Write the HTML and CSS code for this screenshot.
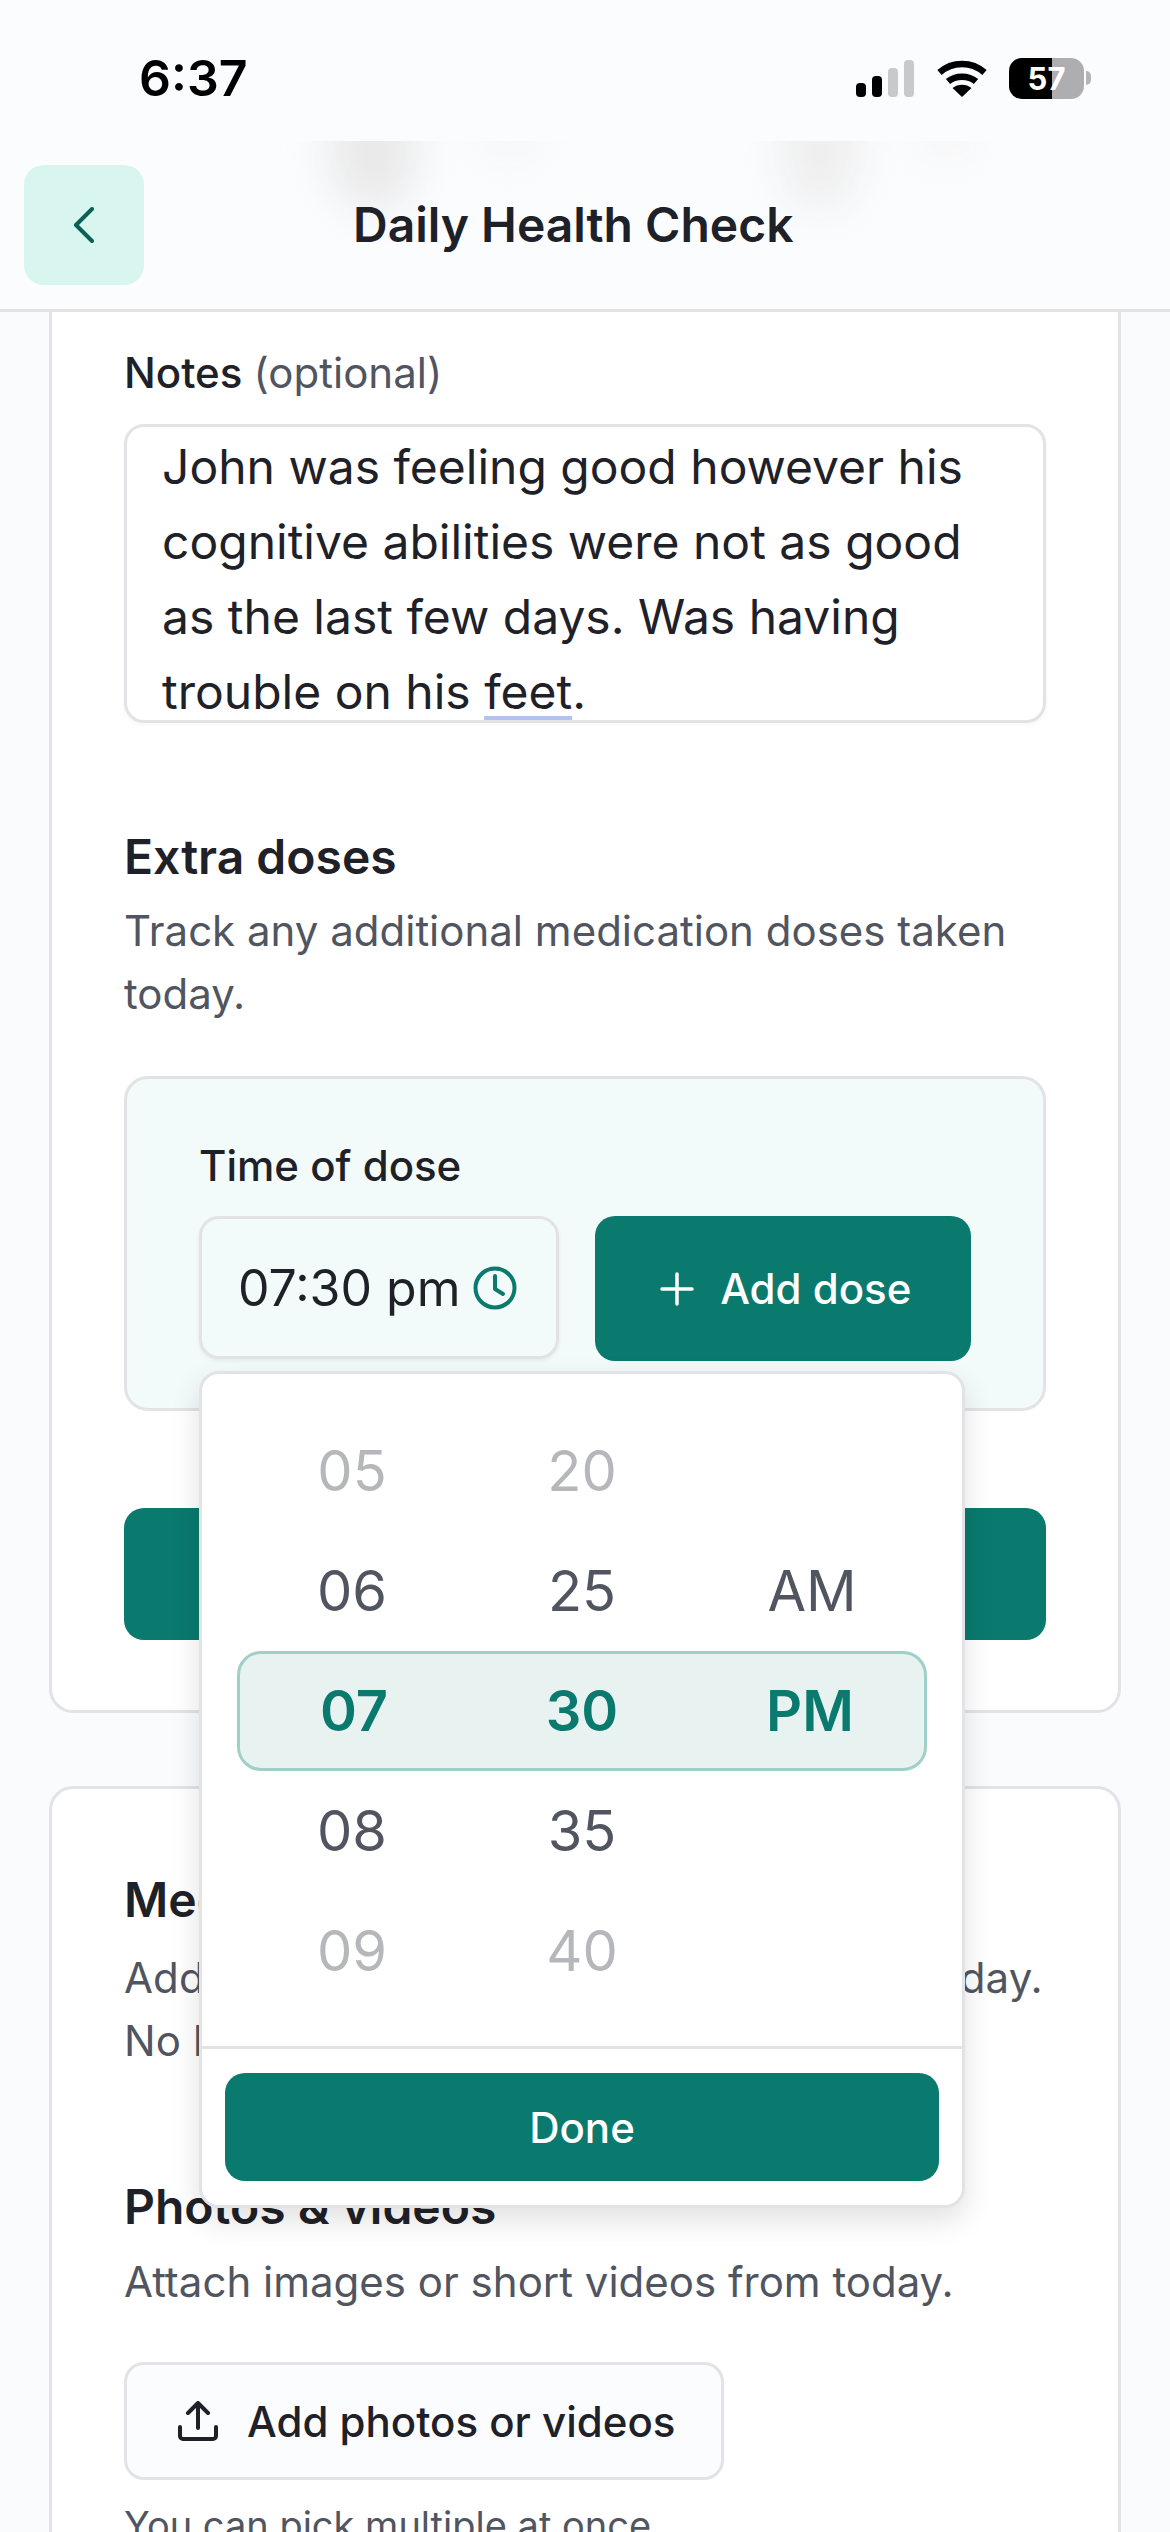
FILE: index.html
```html
<!DOCTYPE html>
<html lang="en">
<head>
  <meta charset="UTF-8" />
  <meta name="viewport" content="width=device-width, initial-scale=1.0"/>
  <title>Daily Health Check</title>
  <link rel="stylesheet" href="styles.css">
</head>
<body>
<div class="phone">

  <header class="top">
    <div class="status">
      <span class="clock">6:37</span>
      <div class="status-icons">
        <svg class="signal" width="58" height="37" viewBox="0 0 58 37">
          <rect x="0" y="23" width="10" height="14" rx="4" fill="#000"/>
          <rect x="16" y="16" width="10" height="21" rx="4" fill="#000"/>
          <rect x="32" y="8" width="10" height="29" rx="4" fill="#c8c9cb"/>
          <rect x="48" y="0" width="10" height="37" rx="4" fill="#c8c9cb"/>
        </svg>
        <svg class="wifi" width="50" height="37" viewBox="0 0 50 37" fill="none" stroke="#000" stroke-width="6.5">
          <path d="M2.5 12.5C15 1 35 1 47.5 12.5"/>
          <path d="M11 21.5C18.500 15 31.500 15 39 21.500"/>
          <path d="M25 37L15.500 28C20.500 23.500 29.500 23.500 34.500 28Z" fill="#000" stroke="none"/>
        </svg>
        <div class="battery"><span>57</span></div>
        <div class="battery-nub"></div>
      </div>
    </div>

    <div class="blur-spots">
      <i class="spot spot-a"></i>
      <i class="spot spot-b"></i>
      <i class="spot spot-c"></i>
      <i class="spot spot-d"></i>
    </div>

    <div class="nav">
      <button class="back">
        <svg width="20" height="36" viewBox="0 0 20 36" fill="none" stroke="#0b5f55" stroke-width="4" stroke-linecap="round" stroke-linejoin="round">
          <path d="M18 2L2 18l16 16"/>
        </svg>
      </button>
      <h1>Daily Health Check</h1>
    </div>
  </header>

  <main class="content">

    <section class="card card-first">
      <div class="field-label">Notes <span class="muted">(optional)</span></div>
      <div class="notes">John was feeling good however his<br>cognitive abilities were not as good<br>as the last few days. Was having<br>trouble on his <span class="spell">feet</span>.</div>

      <h2 class="heading extra-heading">Extra doses</h2>
      <p class="desc">Track any additional medication doses taken today.</p>

      <div class="dose-panel">
        <div class="dose-label">Time of dose</div>
        <div class="dose-row">
          <div class="time-input">
            <span>07:30 pm</span>
            <svg width="44" height="44" viewBox="0 0 44 44" fill="none" stroke="#0a7a6e" stroke-width="4" stroke-linecap="round" stroke-linejoin="round">
              <circle cx="22" cy="22" r="19.500"/>
              <path d="M22 10v13l8 5"/>
            </svg>
          </div>
          <button class="btn-green add-dose">
            <svg width="34" height="34" viewBox="0 0 34 34" fill="none" stroke="#fff" stroke-width="3.500" stroke-linecap="round">
              <path d="M17 2v30M2 17h30"/>
            </svg>
            Add dose
          </button>
        </div>
      </div>

      <button class="btn-green save-btn"></button>
    </section>

    <section class="card card-second">
      <h2 class="heading">Media</h2>
      <p class="desc media-desc">Add photos, videos or voice notes from today.<br>No limit on how many you can add.</p>

      <h2 class="heading photos-heading">Photos &amp; videos</h2>
      <p class="desc photos-desc">Attach images or short videos from today.</p>

      <button class="upload-btn">
        <svg width="40" height="40" viewBox="0 0 40 40" fill="none" stroke="#1f2128" stroke-width="4" stroke-linecap="round" stroke-linejoin="round">
          <path d="M20 27V3M10 12l10-10 10 10"/>
          <path d="M2 26v9a3 3 0 0 0 3 3h30a3 3 0 0 0 3-3v-9"/>
        </svg>
        Add photos or videos
      </button>
      <p class="desc pick-note">You can pick multiple at once.</p>
    </section>
  </main>

  <!-- selector de hora, abierto sobre el contenido -->
  <div class="picker">
    <div class="wheel">
      <div class="wheel-row faded"><span>05</span><span>20</span><span></span></div>
      <div class="wheel-row"><span>06</span><span>25</span><span>AM</span></div>
      <div class="wheel-row selected"><span>07</span><span>30</span><span>PM</span></div>
      <div class="wheel-row"><span>08</span><span>35</span><span></span></div>
      <div class="wheel-row faded"><span>09</span><span>40</span><span></span></div>
    </div>
    <div class="picker-foot">
      <button class="btn-green done">Done</button>
    </div>
  </div>

</div>
</body>
</html>
```

FILE: styles.css
```css
* {
  box-sizing: border-box;
}

body {
  margin: 0;
  font-family: Inter, "Liberation Sans", sans-serif;
  background-color: #f9fbfd;
  color: #1f2128;
}

button {
  font-family: inherit;
  border: none;
  cursor: pointer;
}

.phone {
  position: relative;
  width: 1170px;
  height: 2532px;
  overflow: hidden;
  background-color: #f9fbfd;
}

/* cabecera */
.top {
  position: relative;
  height: 312px;
  background-color: #fbfcfe;
  border-bottom: 3px solid #e2e3e7;
}

.status {
  display: flex;
  justify-content: space-between;
  align-items: center;
  height: 78px;
  padding: 0 79px 0 139px;
  margin-top: 0;
  transform: translateY(39px);
}

.clock {
  font-size: 50px;
  font-weight: 600;
  color: #000;
}

.status-icons {
  display: flex;
  align-items: center;
}

.wifi {
  margin-left: 23px;
}

.battery {
  width: 75px;
  height: 41px;
  margin-left: 22px;
  border-radius: 13px;
  background: linear-gradient(90deg, #000 57%, #aeaeb0 57%);
  color: #fff;
  font-size: 31px;
  font-weight: 700;
  line-height: 41px;
  text-align: center;
}

.battery-nub {
  width: 5px;
  height: 14px;
  margin-left: 2px;
  border-radius: 0 5px 5px 0;
  background-color: #b5b5b7;
}

.blur-spots {
  position: absolute;
  left: 0;
  right: 0;
  top: 141px;
  height: 168px;
  overflow: hidden;
}

.spot {
  position: absolute;
  top: -60px;
  border-radius: 50%;
  background-color: #e9e9e9;
  filter: blur(20px);
}

.spot-a { left: 328px; width: 90px; height: 130px; }
.spot-b { left: 480px; width: 60px; height: 80px; background-color: #f5f5f5; }
.spot-c { left: 780px; width: 80px; height: 130px; background-color: #eeeeee; }
.spot-d { left: 920px; width: 50px; height: 80px; background-color: #f5f5f5; }

.nav {
  position: absolute;
  left: 24px;
  top: 165px;
  display: flex;
  align-items: center;
}

.back {
  display: flex;
  align-items: center;
  justify-content: center;
  width: 120px;
  height: 120px;
  padding: 0;
  border-radius: 20px;
  background-color: #d9f5f0;
}

.nav h1 {
  margin: 0 0 2px 209px;
  font-size: 48px;
  font-weight: 600;
  white-space: nowrap;
}

/* contenido */
.content {
  padding: 0 49px;
}

.card {
  padding: 0 72px;
  background-color: #fff;
  border: 3px solid #e2e3e7;
  border-radius: 24px;
}

.card-first {
  height: 1401px;
  padding-top: 36px;
  border-top: none;
  border-top-left-radius: 0;
  border-top-right-radius: 0;
}

.card-second {
  height: 900px;
  margin-top: 73px;
  padding-top: 83px;
}

.field-label {
  font-size: 42px;
  font-weight: 500;
  line-height: 50px;
}

.muted {
  font-weight: 400;
  color: #50555f;
}

.notes {
  height: 299px;
  margin-top: 26px;
  padding: 2px 0 0 35px;
  overflow: hidden;
  border: 3px solid #e2e3e7;
  border-radius: 20px;
  font-size: 48px;
  line-height: 75px;
  white-space: nowrap;
  box-shadow: 0 2px 4px rgba(0,0,0,0.04);
}

.spell {
  text-decoration: underline #b3c3ee 5px;
  text-underline-offset: 7px;
}

.heading {
  margin: 0;
  font-size: 48px;
  font-weight: 600;
  line-height: 56px;
}

.extra-heading {
  margin-top: 106px;
}

.desc {
  margin: 14px 0 0;
  font-size: 42px;
  line-height: 63px;
  color: #50555f;
}

.dose-panel {
  height: 335px;
  margin-top: 51px;
  padding: 62px 72px 0;
  background-color: #f3fbfa;
  border: 3px solid #e2e3e7;
  border-radius: 24px;
}

.dose-label {
  font-size: 42px;
  font-weight: 500;
  line-height: 50px;
}

.dose-row {
  display: flex;
  gap: 36px;
  margin-top: 25px;
}

.time-input {
  display: flex;
  align-items: center;
  gap: 12px;
  width: 360px;
  height: 143px;
  padding-left: 36px;
  background-color: #f3fbfa;
  border: 3px solid #e2e3e7;
  border-radius: 20px;
  font-size: 50px;
  box-shadow: 0 2px 4px rgba(0,0,0,0.06);
}

.btn-green {
  background-color: #0a7a6e;
  color: #fff;
  border-radius: 20px;
}

.add-dose {
  display: flex;
  align-items: center;
  justify-content: center;
  gap: 26px;
  width: 377px;
  height: 145px;
  padding: 0 0 0 6px;
  font-size: 42px;
  font-weight: 500;
}

.save-btn {
  display: block;
  width: 100%;
  height: 132px;
  margin-top: 97px;
}

.media-desc {
  margin-top: 18px;
  letter-spacing: 0.1px;
  white-space: nowrap;
}

.photos-heading {
  margin-top: 107px;
}

.photos-desc {
  margin-top: 15px;
}

.upload-btn {
  display: flex;
  align-items: center;
  gap: 29px;
  width: 600px;
  height: 118px;
  margin-top: 49px;
  padding-left: 51px;
  background-color: #fbfcfe;
  border: 3px solid #e2e3e7;
  border-radius: 20px;
  color: #1f2128;
  font-size: 42px;
  font-weight: 500;
}

.pick-note {
  margin-top: 14px;
  font-size: 38px;
}

/* selector de hora */
.picker {
  position: absolute;
  left: 199px;
  top: 1371px;
  width: 766px;
  height: 837px;
  background-color: #fff;
  border: 3px solid #e2e3e7;
  border-radius: 20px;
  box-shadow: 0 12px 30px rgba(0,0,0,0.12);
}

.wheel {
  padding: 37px 35px 35px;
}

.wheel-row {
  display: grid;
  grid-template-columns: repeat(3, 1fr);
  align-items: center;
  height: 120px;
  text-align: center;
  font-size: 56px;
  color: #50555f;
}

.wheel-row.faded {
  color: #b5b7ba;
}

.wheel-row.selected {
  background-color: #e8f3f1;
  border: 3px solid #9fd0c8;
  border-radius: 24px;
  color: #0a7a6e;
  font-weight: 600;
}

.picker-foot {
  padding: 24px 23px 0;
  border-top: 3px solid #e2e3e7;
}

.done {
  display: block;
  width: 100%;
  height: 108px;
  font-size: 42px;
  font-weight: 500;
}
```
